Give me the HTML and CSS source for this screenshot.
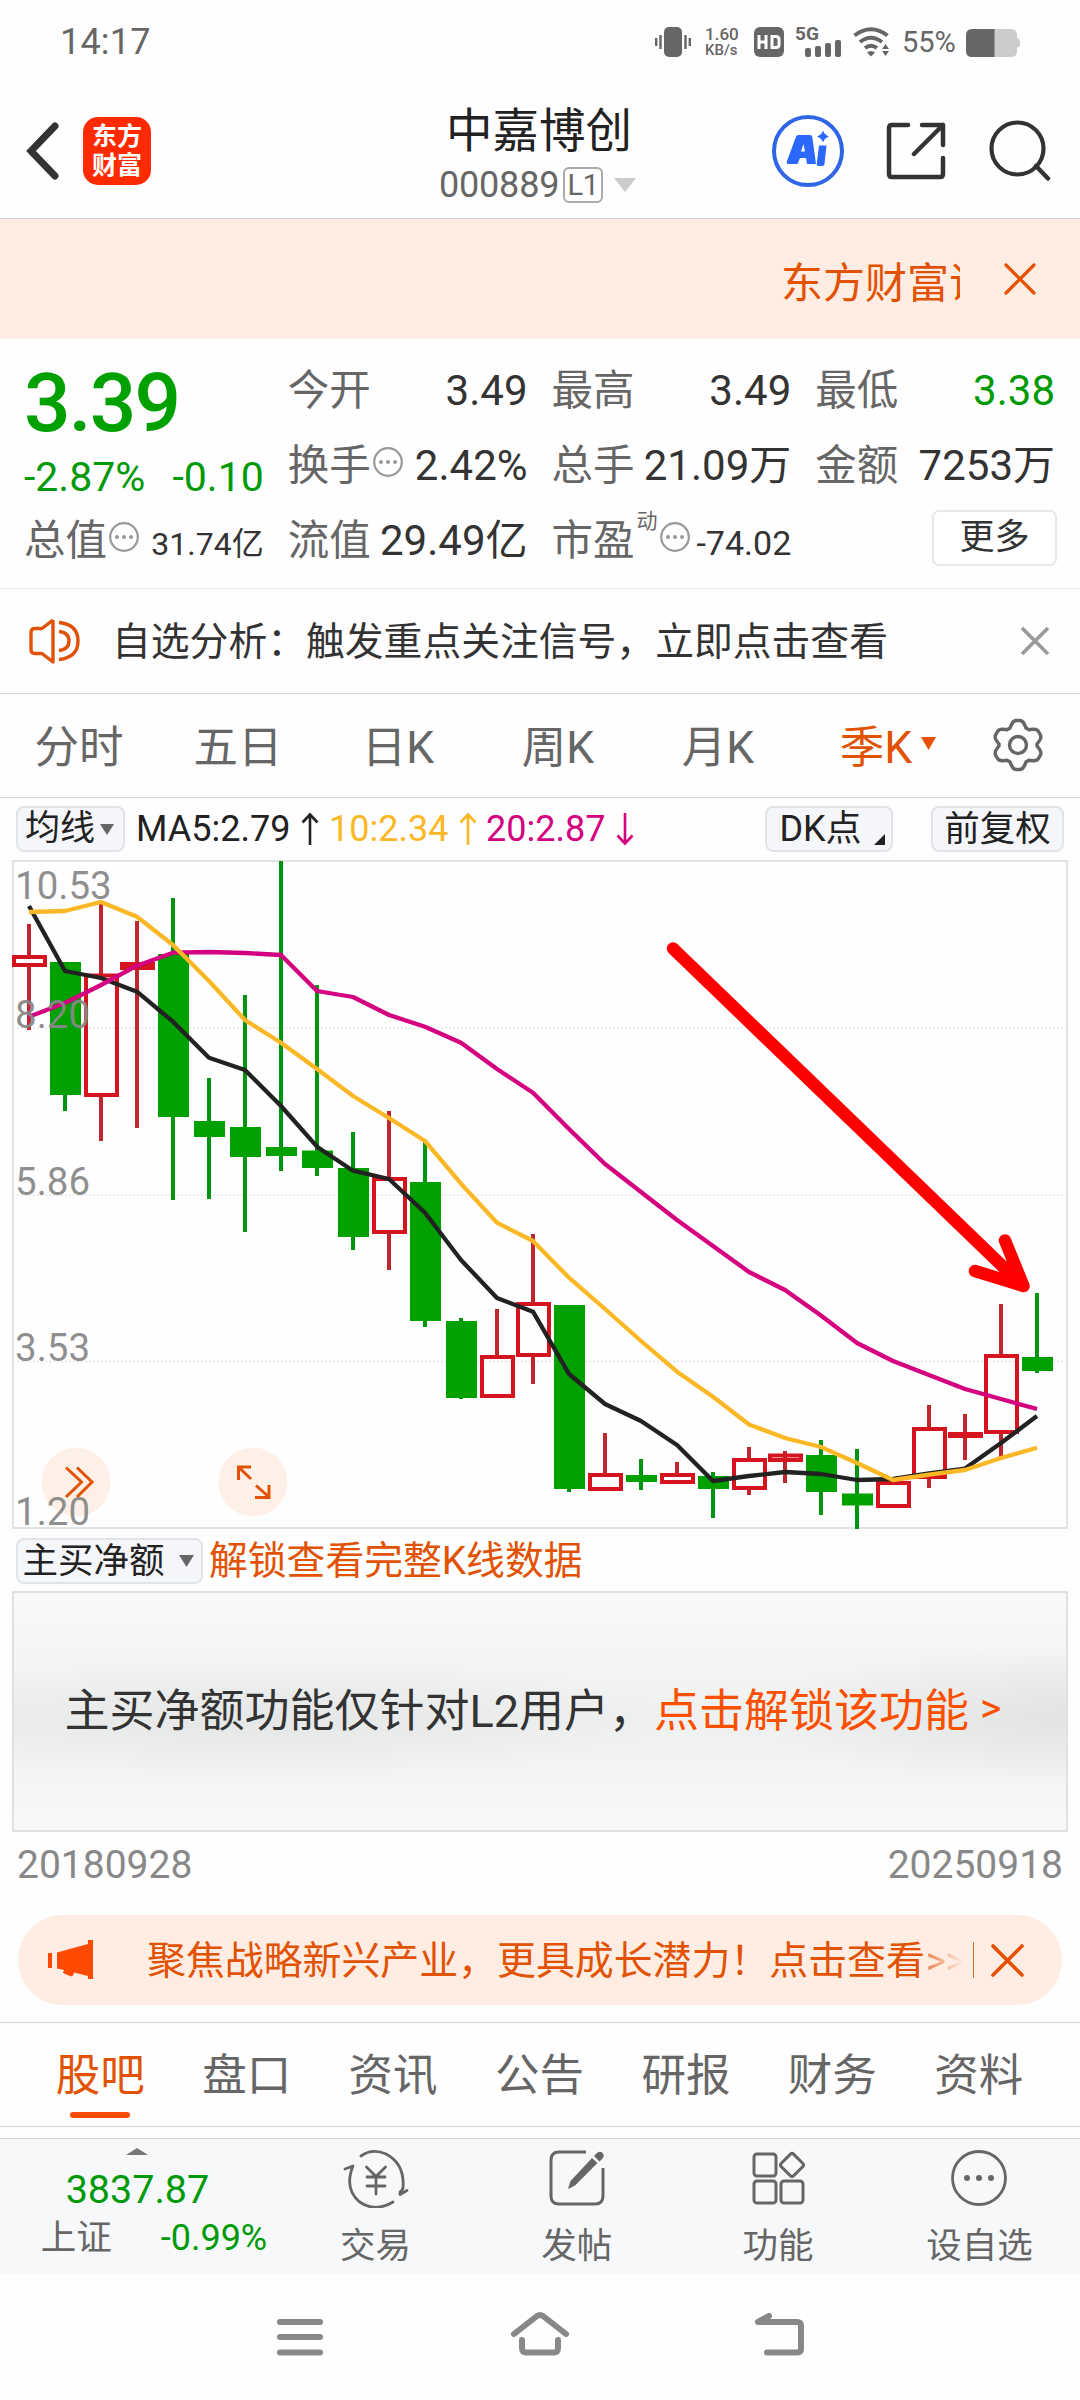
FILE: index.html
```html
<!DOCTYPE html>
<html lang="zh-CN">
<head>
<meta charset="utf-8">
<title>中嘉博创 000889</title>
<link rel="stylesheet" href="styles.css">
</head>
<body>
<div class="status">
  <span class="clock">14:17</span>
  <div class="status-right">
    <svg class="vib" width="36" height="30" viewBox="0 0 36 30"><rect x="9" y="0" width="18" height="30" rx="5"/><path d="M1.2 11v8M5.5 8v14M30.5 8v14M34.8 11v8" stroke="#666" stroke-width="2.4"/></svg>
    <div class="net"><span class="net-n">1.60</span><span class="net-u">KB/s</span></div>
    <svg class="hd" width="30" height="30" viewBox="0 0 30 30"><rect width="30" height="30" rx="6"/><path d="M5 8v14M12 8v14M5 15h7M18 9.5v11h4q3 0 3-3v-5q0-3-3-3z" fill="none" stroke="#fff" stroke-width="3"/></svg>
    <div class="sig"><b>5G</b><svg width="36" height="17" viewBox="0 0 36 17"><rect x="0" y="8" width="6" height="9" rx="2"/><rect x="10" y="6" width="6" height="11" rx="2"/><rect x="20" y="3" width="6" height="14" rx="2"/><rect x="30" y="0" width="6" height="17" rx="2"/></svg></div>
    <svg class="wifi" width="37" height="30" viewBox="0 0 37 30"><path d="M1.500 8.500Q18 -4 34.500 8.500M7 15Q18 6.500 29 15M12 21Q18 16.500 24 21" fill="none" stroke="#666" stroke-width="4"/><path d="M14 25.500q4-3 8 0l-4 4zM29 22l3.500-5 3.500 5zM29 24l3.500 5 3.500-5z"/></svg>
    <span class="pct">55%</span>
    <svg class="bat" width="55" height="28" viewBox="0 0 55 28"><path d="M28 0h17q6 0 6 6v3l3 2v6l-3 2v3q0 6-6 6H28z" fill="#ccc"/><path d="M28.500 0H6Q0 0 0 6v16q0 6 6 6h22.500z"/></svg>
  </div>
</div>

<header class="header">
  <svg class="back" width="34" height="60" viewBox="0 0 34 60"><path d="M29 5L5 30l24 25" fill="none" stroke="#333" stroke-width="7" stroke-linecap="round"/></svg>
  <div class="logo"><span>东方</span><span>财富</span></div>
  <div class="title">
    <h1>中嘉博创</h1>
    <div class="code"><span>000889</span><i>L1</i><svg width="22" height="14" viewBox="0 0 22 14"><path d="M0 0h22L11 14z" fill="#ccc"/></svg></div>
  </div>
  <svg class="ai" width="74" height="74" viewBox="0 0 74 74"><circle cx="37" cy="37" r="34" fill="#fff" stroke="#2f66e6" stroke-width="4"/><path d="M27 21h12q2 0 2.300 2L45 50h-9l-1-6h-6l-2.500 6H17q-2 0-1-3l8.500-23q1-3 2.500-3zm5.500 9L30 37.500h4zM48 31.500h7.500L53.500 50q-.3 2-2.300 2H47.500q-2 0-1.800-2z" fill="#2b68fb"/><path d="M52 16.500q1.500 4.500 6 6-4.500 1.500-6 6-1.500-4.500-6-6 4.500-1.500 6-6z" fill="#2b68fb"/></svg>
  <svg class="share" width="60" height="60" viewBox="0 0 60 60"><path d="M22 4H6Q3 4 3 7v46q0 3 3 3h48q3 0 3-3V37M36 4h21v20M57 4L28 33" fill="none" stroke="#333" stroke-width="4.500" stroke-linecap="round" stroke-linejoin="round"/></svg>
  <svg class="search" width="62" height="62" viewBox="0 0 62 62"><circle cx="28.500" cy="28.500" r="26" fill="none" stroke="#333" stroke-width="4.200"/><path d="M47 46l12 12.500" stroke="#333" stroke-width="4.500" stroke-linecap="round"/></svg>
</header>

<div class="marquee">
  <div class="marquee-text">东方财富证券</div>
  <svg width="32" height="32" viewBox="0 0 32 32"><path d="M2 2l28 28M30 2L2 30" stroke="#e65000" stroke-width="3.200" stroke-linecap="round"/></svg>
</div>

<section class="quote">
  <div class="q-price">
    <div class="price">3.39</div>
    <div class="chg"><span>-2.87%</span><span>-0.10</span></div>
    <div class="cell total"><span class="lab">总值</span><svg class="dots" viewBox="0 0 30 30"><circle cx="15" cy="15" r="13.800"/><path d="M8 15h.01M15 15h.01M22 15h.01"/></svg><span class="val small">31.74亿</span></div>
  </div>
  <div class="q-col">
    <div class="cell"><span class="lab">今开</span><span class="val">3.49</span></div>
    <div class="cell"><span class="lab">换手</span><svg class="dots" viewBox="0 0 30 30"><circle cx="15" cy="15" r="13.800"/><path d="M8 15h.01M15 15h.01M22 15h.01"/></svg><span class="val">2.42%</span></div>
    <div class="cell"><span class="lab">流值</span><span class="val">29.49亿</span></div>
  </div>
  <div class="q-col">
    <div class="cell"><span class="lab">最高</span><span class="val">3.49</span></div>
    <div class="cell"><span class="lab">总手</span><span class="val">21.09万</span></div>
    <div class="cell"><span class="lab">市盈</span><span class="sup">动</span><svg class="dots pe" viewBox="0 0 30 30"><circle cx="15" cy="15" r="13.800"/><path d="M8 15h.01M15 15h.01M22 15h.01"/></svg><span class="val mid">-74.02</span></div>
  </div>
  <div class="q-col">
    <div class="cell"><span class="lab">最低</span><span class="val green">3.38</span></div>
    <div class="cell"><span class="lab">金额</span><span class="val">7253万</span></div>
    <div class="cell"><button class="more">更多</button></div>
  </div>
</section>

<div class="notice">
  <svg width="52" height="46" viewBox="0 0 52 46"><path d="M24 2v42L13 35.500H6q-4 0-4-4v-17q0-4 4-4h7L24 2" fill="none" stroke="#e05206" stroke-width="3.400" stroke-linejoin="round"/><path d="M30 13.500q10 1 10 9.500t-10 9.500M30 4.500q19 2 19 18.500T30 41.500" fill="none" stroke="#e05206" stroke-width="3.400"/></svg>
  <span class="notice-text">自选分析：触发重点关注信号，立即点击查看</span>
  <svg width="30" height="30" viewBox="0 0 30 30"><path d="M2 2l26 26M28 2L2 28" stroke="#999" stroke-width="3.600"/></svg>
</div>

<nav class="periods">
  <span>分时</span><span>五日</span><span>日K</span><span>周K</span><span>月K</span>
  <span class="on">季K<svg width="15" height="13" viewBox="0 0 15 13"><path d="M0 0h15L7.500 13z" fill="#e65000"/></svg></span>
  <svg class="gear" width="54" height="54" viewBox="0 0 54 54"><path d="M20.500 6.500Q22 3 25 2.500h4q3 .5 4.500 4l1.500 3.500 3 1.700 4-.4q4-.2 5.500 2.200l2 3.600q1.200 2.900-1.200 5.900L46 26v2l2.300 3q2.400 3 1.200 5.900l-2 3.600q-1.500 2.400-5.500 2.200l-4-.4-3 1.700-1.500 3.500q-1.500 3.500-4.500 4h-4q-3-.5-4.500-4L19 44l-3-1.700-4 .4q-4 .2-5.500-2.200l-2-3.600Q3.300 34 5.700 31L8 28v-2l-2.300-3Q3.300 20 4.500 17.100l2-3.600Q8 11.100 12 11.300l4 .4 3-1.700z" fill="none" stroke="#666" stroke-width="3.400"/><circle cx="27" cy="27" r="8.500" fill="none" stroke="#666" stroke-width="3.400"/></svg>
</nav>

<div class="ma">
  <button class="chip ma-pick">均线<svg width="14" height="11" viewBox="0 0 14 11"><path d="M0 0h14L7 11z" fill="#666"/></svg></button>
  <span class="ma5">MA5:2.79<svg width="18" height="34" viewBox="0 0 18 34"><path d="M9 33V3M1.500 10.500L9 2.500l7.500 8" /></svg></span>
  <span class="ma10">10:2.34<svg width="18" height="34" viewBox="0 0 18 34"><path d="M9 33V3M1.500 10.500L9 2.500l7.500 8"/></svg></span>
  <span class="ma20">20:2.87<svg width="18" height="34" viewBox="0 0 18 34"><path d="M9 1v30M1.500 23.500L9 31.500l7.500-8"/></svg></span>
  <button class="chip dk">DK点<svg width="11" height="11" viewBox="0 0 11 11"><path d="M11 0v11H0z" fill="#222"/></svg></button>
  <button class="chip adj">前复权</button>
</div>

<svg class="chart" width="1080" height="670" viewBox="0 860 1080 670">
  <g class="frame">
    <path d="M13 861H1067V1528H13Z" fill="none" stroke="#e2e3e3" stroke-width="2"/>
    <path d="M13 1028H1067M13 1195H1067M13 1361.500H1067" stroke="#e6e6e6" stroke-width="1.300" stroke-dasharray="2 2"/>
  </g>
  <g class="tools">
    <circle cx="76" cy="1482" r="34.500"/><circle cx="253" cy="1482" r="34.500"/>
    <path d="M66 1467.500l15.500 14.500L66 1497M77 1467.500l15 14.500-15 15"/>
    <path d="M251 1467H238.500v13M239 1467.500l12 11.500M256 1485.500l13 11.500M255 1497.500h14V1485"/>
  </g>
  <path class="wick up" d="M29 924V955M29 967V1030M101 902V974M101 1097V1141M137 921V1128M389 1111V1177M389 1234V1270M497 1309V1355M533 1234V1302M533 1357V1384M605 1433V1473M677 1462V1473M749 1447V1458M749 1490V1495M785 1451V1483M929 1405V1427M929 1479V1488M965 1414V1460M1001 1304V1354M1001 1434V1460"/>
  <path class="body up" d="M14 957h31v8h-31zM86 975.500h31v119.500h-31zM122 964h31v4h-31zM374 1179h31v53h-31zM482 1357h31v39h-31zM518 1304h31v51h-31zM590 1475h31v14h-31zM662 1475h31v7h-31zM734 1460h31v28h-31zM770 1455.500h31v4.500h-31zM878 1483h31v23h-31zM914 1429h31v48h-31zM950 1434h31v2h-31zM986 1356h31v76h-31z"/>
  <path class="wick down" d="M65 1000V1111M173 898V1200M209 1078V1199M245 995V1232M281 861V1171M317 985V1176M353 1132V1250M425 1141V1327M461 1318V1399M569 1305V1492M641 1459V1490M713 1472V1518M821 1440V1515M857 1449V1529M1037 1293V1373"/>
  <path class="body down" d="M50 962h31v133h-31zM158 954h31v163h-31zM194 1121h31v16h-31zM230 1127h31v30h-31zM266 1147h31v9h-31zM302 1150.500h31v17.500h-31zM338 1168h31v69h-31zM410 1182h31v139h-31zM446 1321h31v77h-31zM554 1305h31v184h-31zM626 1475h31v7h-31zM698 1476h31v13h-31zM806 1455h31v37h-31zM842 1493.500h31v12h-31zM1022 1357h31v14h-31z"/>
  <polyline class="l5" points="29,906 65,971 101,978 137,991.7 173,1021.7 209,1057.7 245,1070 281,1106 317,1146.700 353,1170.700 389,1179 425,1212.700 461,1260 497,1298 533,1311.700 569,1374 605,1404 641,1421 677,1445 713,1481 749,1476 785,1472 821,1474 857,1480 893,1479 929,1473.500 965,1468.600 1001,1443 1037,1416"/>
  <polyline class="l20" points="29,1016.700 65,1003 101,985 137,965.700 173,952.700 209,952 245,953 281,955 317,991 353,997 389,1015 425,1026.700 461,1042.700 497,1069 533,1092.700 569,1129 605,1164 641,1192 677,1220 713,1246 749,1272 785,1290 821,1315.500 857,1343 893,1361 929,1375 965,1389 1001,1399 1037,1409"/>
  <polyline class="l10" points="29,912 65,911 101,902 137,916.700 173,945 209,981 245,1020 281,1042.700 317,1069 353,1096 389,1118 425,1141 461,1183.700 497,1222.700 533,1241 569,1277.700 605,1309 641,1341 677,1371.700 713,1396.700 749,1424.500 785,1438 821,1447 857,1463 893,1480 929,1474.700 965,1470 1001,1458 1037,1447.800"/>
  <g class="axis">
    <text x="15" y="899">10.53</text><text x="15" y="1027.500">8.20</text><text x="15" y="1194.500">5.86</text><text x="15" y="1361">3.53</text><text x="15" y="1525">1.20</text>
  </g>
  <path class="pointer" d="M673 948.500L1021 1284M1005 1240.500L1023.500 1286 975 1271"/>
</svg>

<div class="sub-head">
  <button class="chip sub-pick">主买净额<svg width="15" height="12" viewBox="0 0 15 12"><path d="M0 0h15L7.500 12z" fill="#666"/></svg></button>
  <a>解锁查看完整K线数据</a>
</div>
<div class="locked">主买净额功能仅针对L2用户，<a>点击解锁该功能<span class="gt">&gt;</span></a></div>
<div class="dates"><span>20180928</span><span>20250918</span></div>

<div class="promo">
  <svg class="horn" width="46" height="40" viewBox="0 0 46 40"><path d="M0 13h4v15H0zM9 12.500L40 4V0h5v39h-5v-3l-14-3.500q-1 5-4 3.500l-7-3 1-3-7-1.500z" fill="#ff4a00"/></svg>
  <span class="promo-text">聚焦战略新兴产业，更具成长潜力！点击查看<em>&gt;&gt;</em></span>
  <i class="bar"></i>
  <svg width="33" height="33" viewBox="0 0 33 33"><path d="M2 2l29 29M31 2L2 31" stroke="#e65000" stroke-width="3.600" stroke-linecap="round"/></svg>
</div>

<nav class="tabs">
  <span class="on">股吧</span><span>盘口</span><span>资讯</span><span>公告</span><span>研报</span><span>财务</span><span>资料</span>
</nav>
<div class="gap"></div>

<footer class="bottom">
  <div class="index">
    <svg width="22" height="7" viewBox="0 0 22 7"><path d="M0 7h22L11 0z" fill="#777"/></svg>
    <div class="idx-n">3837.87</div>
    <div class="idx-r"><span>上证</span><b>-0.99%</b></div>
  </div>
  <div class="act"><svg width="66" height="60" viewBox="0 0 66 60"><g fill="none" stroke="#666" stroke-width="2.800" stroke-linecap="round" stroke-linejoin="round"><path d="M18 8Q29 0 43 6 62 16 60 40M60 40l-3 6M2 21l8-3Q1 40 16 53.500 32 65 50 54M57 44v2.500l7-4M23.500 19L33 28.500 42.500 19M33 28.500V46M24 29h18M24 38h18"/></g></svg><span>交易</span></div>
  <div class="act"><svg width="58" height="60" viewBox="0 0 58 60"><path d="M38 4H11Q3 4 3 12v36q0 8 8 8h36q8 0 8-8V20" fill="none" stroke="#666" stroke-width="3"/><path d="M44 10l5.500 5L27 37.500l-7 3.500 2.500-8zM46 8l3-3q3-2.500 5.500 0t0 5.500l-3 3z" fill="#666"/></svg><span>发帖</span></div>
  <div class="act"><svg width="58" height="60" viewBox="0 0 58 60"><g fill="none" stroke="#666" stroke-width="3"><rect x="5" y="6" width="22" height="22" rx="3"/><rect x="5" y="33" width="22" height="22" rx="3"/><rect x="32" y="33" width="22" height="22" rx="3"/><rect x="-8.800" y="-8.800" width="17.600" height="17.600" rx="2.500" transform="translate(43 17) rotate(45)"/></g></svg><span>功能</span></div>
  <div class="act"><svg width="58" height="60" viewBox="0 0 58 60"><circle cx="29" cy="30" r="26.500" fill="none" stroke="#666" stroke-width="2.800"/><circle cx="17" cy="30" r="3"/><circle cx="29" cy="30" r="3"/><circle cx="41" cy="30" r="3"/></svg><span>设自选</span></div>
</footer>

<div class="sysnav">
  <svg width="60" height="50" viewBox="0 0 60 50"><path d="M10 11h40M10 26h40M10 41.500h40"/></svg>
  <svg width="60" height="50" viewBox="0 0 60 50"><path d="M4 23L27 5q3-2 6 0l23 18M12 29v8q0 4.500 4.500 4.500h27q4.500 0 4.500-4.500v-8"/></svg>
  <svg width="60" height="50" viewBox="0 0 60 50"><path d="M19 5L8 11h39q4 0 4 4v22.500q0 4-4 4H17"/></svg>
</div>
</body>
</html>
```
FILE: styles.css
```css
* { box-sizing: border-box; }
body {
  margin: 0; width: 1080px; height: 2400px; overflow: hidden; background: #fefefe;
  font-family: Roboto, "Noto Sans CJK SC", sans-serif; color: #333;
  display: flex; flex-direction: column;
}
body > * { flex: none; }
svg { display: block; flex: none; }
h1 { margin: 0; font-weight: 400; }
button { font-family: inherit; padding: 0; margin: 0; }
i, em { font-style: normal; }
a { color: #e25203; }

.status { height: 84px; display: flex; justify-content: space-between; padding: 0 59px 0 60px; color: #666; fill: #666; }
.clock { font-size: 36px; line-height: 84px; letter-spacing: .2px; }
.status-right { display: flex; align-items: center; }
.net { display: flex; flex-direction: column; width: 34px; margin-left: 14.500px; font-weight: 500; }
.net-n { font-size: 17px; line-height: 15px; }
.net-u { font-size: 15px; line-height: 16px; }
.hd { margin-left: 15px; }
.sig { margin-left: 11px; width: 46px; height: 30px; display: flex; flex-direction: column; }
.sig b { font-size: 19px; line-height: 14px; height: 13px; }
.sig svg { margin-left: 10px; }
.wifi { margin-left: 12px; }
.pct { font-size: 29px; line-height: 30px; margin-left: 12px; width: 56px; }
.bat { margin-left: 8px; margin-top: 2px; }

.header { height: 135px; border-bottom: 1px solid #d0d4d6; display: flex; align-items: center; padding: 0 26px 0 26px; }
.logo { width: 68px; height: 68px; border-radius: 15px; background: #ff2a00; color: #fff; font-weight: 700; font-size: 25px; line-height: 29px; margin-left: 23px; display: flex; flex-direction: column; align-items: center; justify-content: center; }
.title { width: 200px; margin-left: 288px; padding-top: 8px; display: flex; flex-direction: column; align-items: center; }
.title h1 { font-size: 46.500px; line-height: 60px; color: #222; }
.code { display: flex; align-items: center; height: 48px; font-size: 36px; color: #666; width: 200px; letter-spacing: -.2px; }
.code i { width: 40px; height: 36px; margin-left: 4px; border: 2px solid #aaa; border-radius: 6px; font-size: 29px; line-height: 33px; text-align: center; }
.code svg { margin-left: 11px; }
.ai { margin-left: 132px; }
.share { margin-left: 41px; }
.search { margin-left: 43px; }

.marquee { height: 120px; background: #ffece2; display: flex; align-items: center; justify-content: flex-end; padding: 0 44px 0 0; }
.marquee-text { width: 179px; overflow: hidden; white-space: nowrap; font-size: 42px; color: #e25203; margin-right: 44px; }

.quote { height: 250px; border-bottom: 1px solid #e8e8e8; padding: 14px 25px 0 24px; display: flex; }
.q-price { width: 240px; margin-right: 24px; }
.price { color: #00a000; font-weight: 500; font-size: 82px; line-height: 101px; height: 86px; letter-spacing: -1.800px; }
.chg { display: flex; justify-content: space-between; color: #009a08; font-size: 41px; line-height: 76px; height: 64px; }
.q-col { width: 240px; margin-right: 24px; }
.q-col:last-child { margin-right: 0; }
.cell { height: 75px; display: flex; align-items: baseline; font-size: 42px; line-height: 75px; white-space: nowrap; }
.lab { color: #666; font-size: 41.500px; }
.val { margin-left: auto; }
.val.green { color: #009a08; }
.small { font-size: 32px; }
.mid { font-size: 34px; }
.dots { width: 30px; height: 30px; fill: none; stroke: #999; stroke-width: 2.200; align-self: center; margin: 0 0 8px 2px; }
.dots path { stroke-width: 4; stroke-linecap: round; }
.sup { font-size: 21px; color: #666; line-height: 20px; align-self: flex-start; margin: 8px 0 0 2px; }
.more { width: 125px; height: 56px; margin: 0 -2px 5px auto; align-self: center; border: 2px solid #e6e8ea; border-radius: 7px; background: #fff; font-size: 35px; line-height: 50px; color: #333; }

.notice { height: 105px; border-bottom: 1px solid #d4d4d4; display: flex; align-items: center; padding: 0 30px 0 29px; }
.notice-text { font-size: 38.800px; margin: -7px 0 0 31px; flex: 1; white-space: nowrap; }

.periods { height: 104px; border-bottom: 1px solid #d4d4d4; display: flex; align-items: center; color: #666; font-size: 44.500px; padding-bottom: 5px; }
.periods span { width: 160px; text-align: center; }
.periods span:first-child { width: 158px; }
.periods .on { color: #e25203; width: 158px; display: flex; align-items: center; justify-content: center; gap: 9px; margin-left: 11px; }
.gear { margin-left: 24px; margin-top: 3px; }

.ma { height: 62px; display: flex; align-items: center; padding: 0 16px; font-size: 36px; color: #222; }
.chip { height: 46px; border: 2px solid #e0e4e8; border-radius: 8px; background: #f5f6f9; font-size: 35px; line-height: 40px; color: #222; display: flex; align-items: center; justify-content: center; }
.ma-pick { width: 109px; gap: 5px; padding-right: 2px; }
.ma span { display: flex; align-items: center; }
.ma span svg { fill: none; stroke: currentColor; stroke-width: 2.600; margin-left: 11px; }
.ma5 { margin-left: 11px; width: 193px; }
.ma10 { color: #fbb826; width: 157px; }
.ma20 { color: #d4007f; }
.dk { width: 128px; margin-left: auto; gap: 12px; font-size: 36px; padding-left: 6px; }
.dk svg { align-self: flex-end; margin-bottom: 5px; }
.adj { width: 133px; margin-left: 38px; font-size: 35.500px; }

.chart { font-family: Roboto, sans-serif; }
.axis { font-size: 38.500px; fill: #888; fill-opacity: .95; }
.wick { fill: none; stroke-width: 4; }
.wick.up { stroke: #c1262f; }
.wick.down { stroke: #009410; }
.body.up { fill: none; stroke: #d6141f; stroke-width: 4; }
.body.down { fill: #00a000; }
.l5, .l10, .l20 { fill: none; stroke-width: 4.300; stroke-linejoin: round; }
.l5 { stroke: #222; }
.l10 { stroke: #fbb826; }
.l20 { stroke: #d4007f; }
.tools circle { fill: #fff0e7; }
.tools path { fill: none; stroke: #e05206; stroke-width: 3; }
.pointer { fill: none; stroke: #f00; stroke-width: 12.500; stroke-linecap: round; stroke-linejoin: round; }

.sub-head { height: 61px; display: flex; align-items: center; padding: 0 16px; font-size: 38.800px; }
.sub-head a { margin-top: -8px; }
.sub-pick { width: 187px; gap: 14px; margin-right: 6px; font-size: 35.500px; padding-right: 3px; }
.locked { height: 241px; margin: 0 12px; border: 2px solid #dfe1e1; display: flex; align-items: center; justify-content: center; padding: 0 14px 8px 0; font-size: 45px; white-space: nowrap;
  background: radial-gradient(ellipse 40% 26% at 24% 53%, rgba(225,228,227,.75), transparent), radial-gradient(ellipse 30% 30% at 100% 52%, rgba(222,225,224,.8), transparent), linear-gradient(#f8f9f9, #f0f2f1 48%, #eff1f0 55%, #f8f9f9); }
.locked a { color: #fb5000; display: flex; }
.gt { margin-left: 11px; font-size: 41px; align-self: center; }
.dates { height: 83px; display: flex; justify-content: space-between; padding: 0 17px; font-size: 39px; line-height: 67px; color: #888; }

.promo { height: 90px; margin: 0 18px 17px; border-radius: 45px; background: #ffece2; display: flex; align-items: center; padding: 0 38px 0 30px; color: #e25203; }
.promo-text { font-size: 38.900px; margin: -6px 0 0 53px; white-space: nowrap; width: 822px; flex: none; }
.promo em { background: linear-gradient(90deg, #e88350, #ffece2 95%); -webkit-background-clip: text; background-clip: text; color: transparent; letter-spacing: -1px; margin-left: 1px; }
.bar { width: 2px; height: 36px; background: #d0692f; margin-left: 4px; margin-right: 17px; }

.tabs { height: 105px; border: solid #d0d4d6; border-width: 1px 0; display: flex; padding: 0 28px 0 27px; font-size: 44.500px; line-height: 106px; color: #666; }
.tabs span { flex: 1; text-align: center; }
.tabs .on { color: #e25203; position: relative; }
.tabs .on::after { content: ""; position: absolute; left: 50%; top: 89px; width: 60px; height: 6px; margin-left: -30px; border-radius: 3px; background: #fa4b00; }
.gap { height: 11px; }

.bottom { height: 136px; border-top: 1px solid #d0d4d6; background: #f6f8fa; display: flex; padding-right: 0; }
.index { width: 275px; display: flex; flex-direction: column; align-items: center; padding-top: 9px; color: #009a08; }
.idx-n { font-size: 39.500px; line-height: 46px; margin-top: 12px; }
.idx-r { display: flex; align-items: baseline; gap: 49px; font-size: 36px; line-height: 50px; margin: 0 0 0 33px; }
.idx-r span { color: #666; font-size: 35.500px; }
.idx-r b { font-weight: 400; }
.act { width: 201.300px; display: flex; flex-direction: column; align-items: center; padding-top: 9px; color: #666; fill: #666; font-size: 35.500px; }
.act span { line-height: 52px; margin-top: 12px; }

.sysnav { flex: 1; display: flex; justify-content: center; gap: 180px; padding-top: 37px; }
.sysnav path { fill: none; stroke: #888; stroke-width: 6; stroke-linecap: round; stroke-linejoin: round; }
```
